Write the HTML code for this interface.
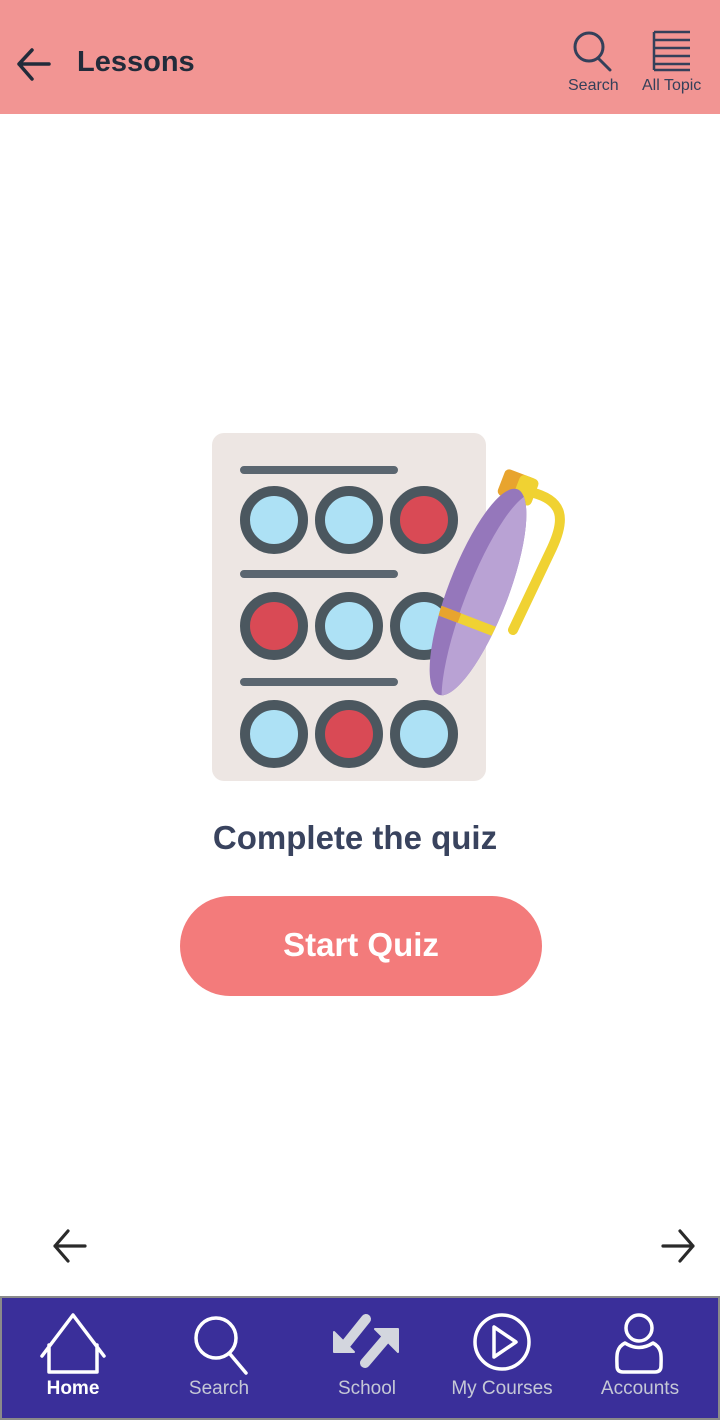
<!DOCTYPE html>
<html><head><meta charset="utf-8"><style>
*{margin:0;padding:0;box-sizing:border-box}
body{width:720px;height:1420px;background:#fff;font-family:"Liberation Sans",Arial,sans-serif;position:relative;overflow:hidden}
.hdr{position:absolute;left:0;top:0;width:720px;height:114px;background:#f29593}
.title{position:absolute;left:77px;top:46px;font-size:29px;font-weight:600;color:#222b3a}
.hl{position:absolute;font-size:16px;color:#34405a;top:77px}
.t1{position:absolute;left:0;width:720px;top:819px;text-align:center;font-size:33px;font-weight:700;color:#39435e;padding-right:10px}
.btn{position:absolute;left:180px;top:896px;width:362px;height:100px;border-radius:50px;background:#f37b7b;color:#fff;font-size:33px;font-weight:700;text-align:center;line-height:98px}
.nav{position:absolute;left:0;top:1296px;width:720px;height:124px;background:#3a2f9a;border:2px solid #8a8a8a}
.nl{position:absolute;top:1378px;font-size:19px;color:#c5c8d6;text-align:center;width:140px}
</style></head><body>
<div class="hdr">
<svg style="position:absolute;left:14px;top:45px" width="40" height="40" viewBox="0 0 40 40"><path d="M35 19H5M18 5L5 19L18 34" fill="none" stroke="#222b3a" stroke-width="3.5" stroke-linecap="round" stroke-linejoin="round"/></svg>
<div class="title">Lessons</div>
<svg style="position:absolute;left:570px;top:30px" width="45" height="42" viewBox="0 0 45 42"><circle cx="19" cy="17" r="14" fill="none" stroke="#34405a" stroke-width="3"/><path d="M28 28L40 40" stroke="#34405a" stroke-width="3" stroke-linecap="round"/></svg>
<div class="hl" style="left:568px">Search</div>
<svg style="position:absolute;left:652px;top:30px" width="40" height="42" viewBox="0 0 40 42"><path d="M2 2H38M2 10H38M2 18H38M2 26H38M2 34H38M2 40H38M2 2V40" fill="none" stroke="#34405a" stroke-width="2.5"/></svg>
<div class="hl" style="left:642px">All Topic</div>
</div>

<svg style="position:absolute;left:0;top:0" width="720" height="800" viewBox="0 0 720 800">
<rect x="212" y="433" width="274" height="348" rx="12" fill="#ede6e3"/>
<g stroke="#5b6670" stroke-width="8" stroke-linecap="round"><path d="M244 470H394M244 574H394M244 682H394"/></g>
<g stroke="#4b575f" stroke-width="10">
<circle cx="274" cy="520" r="29" fill="#ade1f5"/><circle cx="349" cy="520" r="29" fill="#ade1f5"/><circle cx="424" cy="520" r="29" fill="#d94a55"/>
<circle cx="274" cy="626" r="29" fill="#d94a55"/><circle cx="349" cy="626" r="29" fill="#ade1f5"/><circle cx="424" cy="626" r="29" fill="#ade1f5"/>
<circle cx="274" cy="734" r="29" fill="#ade1f5"/><circle cx="349" cy="734" r="29" fill="#d94a55"/><circle cx="424" cy="734" r="29" fill="#ade1f5"/>
</g>
<path d="M530 492C565 500 565 520 552 548L513 630" fill="none" stroke="#f0d232" stroke-width="10" stroke-linecap="round"/>
<g transform="rotate(21 478 592)">
<rect x="460" y="466" width="34" height="28" rx="5" fill="#e8a42e"/>
<rect x="476" y="466" width="20" height="28" rx="5" fill="#f0d232"/>
<defs><clipPath id="pc"><ellipse cx="478" cy="592" rx="30" ry="110"/></clipPath></defs>
<ellipse cx="478" cy="592" rx="30" ry="110" fill="#9577bb"/>
<g clip-path="url(#pc)"><ellipse cx="496" cy="600" rx="28" ry="120" fill="#b9a2d4"/>
<rect x="440" y="618" width="80" height="10" fill="#f0d232"/><rect x="440" y="618" width="30" height="10" fill="#e8a42e"/></g>
</g>
</svg>

<div class="t1">Complete the quiz</div>
<div class="btn">Start Quiz</div>

<svg style="position:absolute;left:50px;top:1228px" width="40" height="36" viewBox="0 0 40 36"><path d="M35 18H5M18 3L5 18L18 33" fill="none" stroke="#2a2a2a" stroke-width="3.2" stroke-linecap="round" stroke-linejoin="round"/></svg>
<svg style="position:absolute;left:658px;top:1228px" width="40" height="36" viewBox="0 0 40 36"><path d="M5 18H35M22 3L35 18L22 33" fill="none" stroke="#2a2a2a" stroke-width="3.2" stroke-linecap="round" stroke-linejoin="round"/></svg>

<div class="nav"></div>
<svg style="position:absolute;left:0;top:1296px" width="720" height="80" viewBox="0 0 720 80">
<path d="M42 60L73 19L104 60M49 49V76H97V49" fill="none" stroke="#fff" stroke-width="3.5" stroke-linecap="round" stroke-linejoin="round"/>
<circle cx="216" cy="42" r="20" fill="none" stroke="#fff" stroke-width="3.5"/><path d="M230 58L246 77" stroke="#fff" stroke-width="3.5" stroke-linecap="round"/>
<g fill="#d3d6de" stroke="#d3d6de" stroke-linejoin="round">
<path d="M366 23L346 48" stroke-width="10" stroke-linecap="round"/>
<path d="M334 36L334 56L354 56Z" stroke-width="2"/>
<path d="M365 67L388 40" stroke-width="10" stroke-linecap="round"/>
<path d="M375 33L398 33L398 56Z" stroke-width="2"/>
</g>
<circle cx="502" cy="46" r="27" fill="none" stroke="#fff" stroke-width="3.5"/><path d="M494 31V61L516 46Z" fill="none" stroke="#fff" stroke-width="3.5" stroke-linejoin="round"/>
<circle cx="639" cy="32" r="13" fill="none" stroke="#fff" stroke-width="3.5"/><path d="M625 47C615 52 617 62 617 70Q617 76 623 76H655Q661 76 661 70C661 62 663 52 653 47Q639 56 625 47Z" fill="none" stroke="#fff" stroke-width="3.5" stroke-linejoin="round"/>
</svg>
<div class="nl" style="left:3px;color:#fff;font-weight:700">Home</div>
<div class="nl" style="left:149px">Search</div>
<div class="nl" style="left:297px">School</div>
<div class="nl" style="left:432px">My Courses</div>
<div class="nl" style="left:570px">Accounts</div>
</body></html>
